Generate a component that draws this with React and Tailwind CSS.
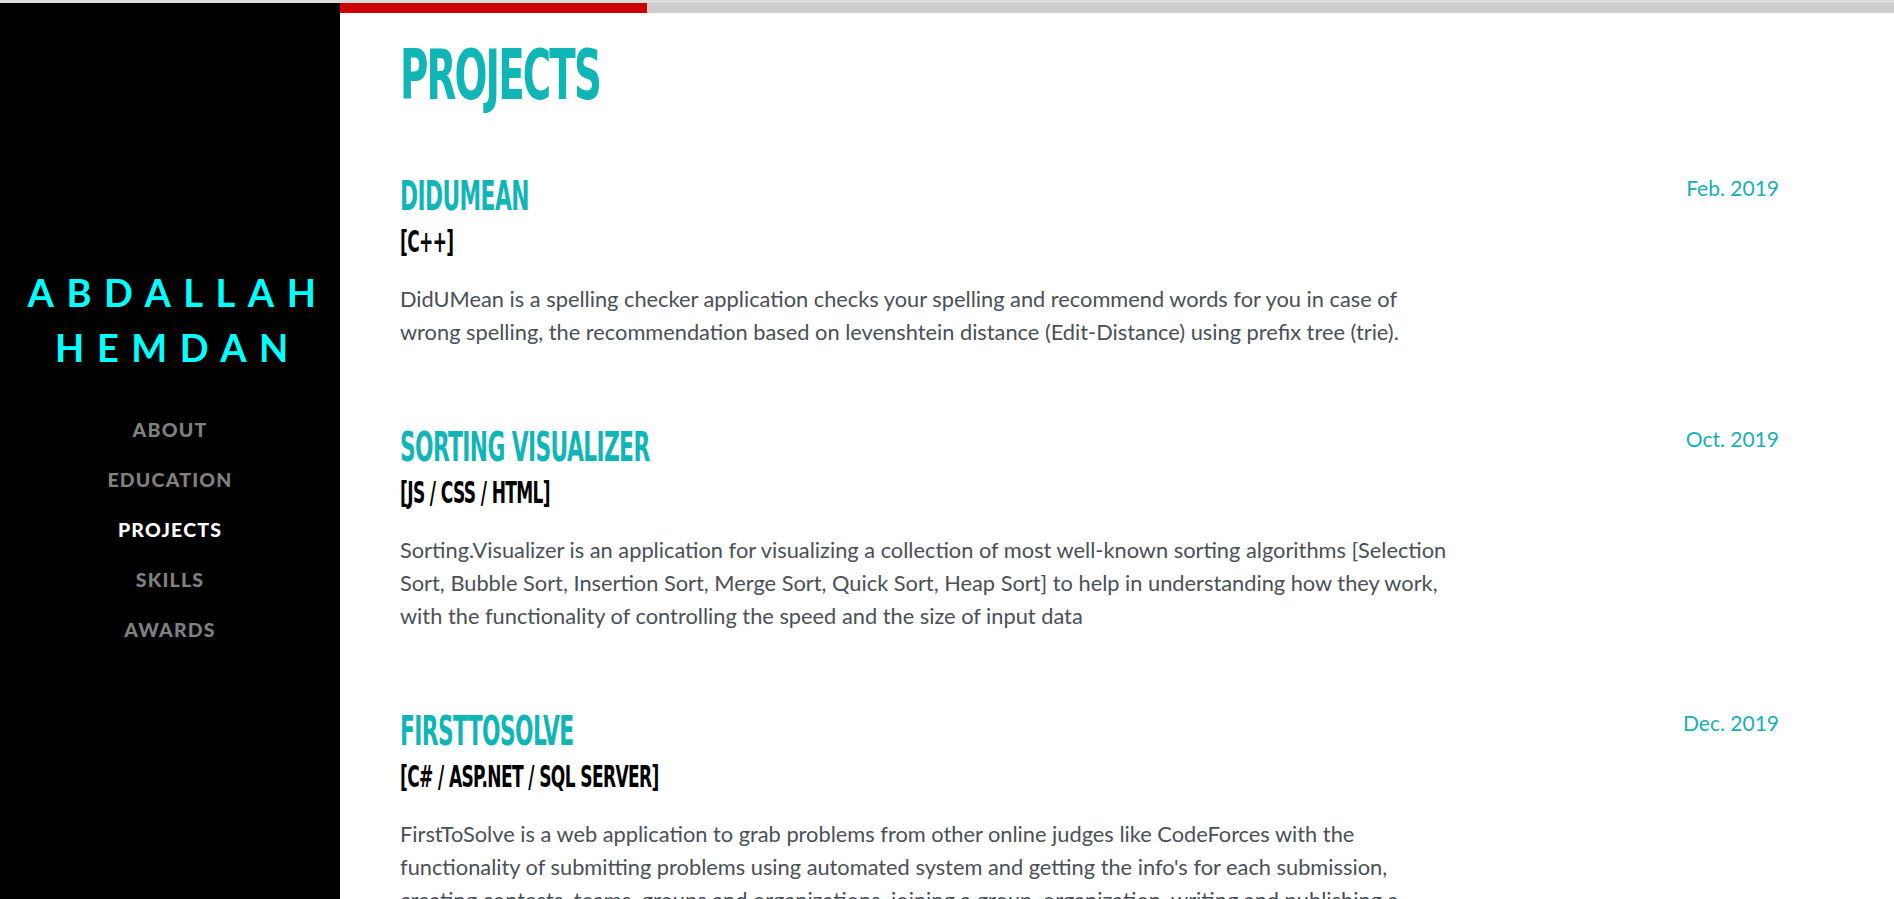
import React from 'react';

const NAV = ['About', 'Education', 'Projects', 'Skills', 'Awards'];

const PROJECTS = [
  {
    title: 'DidUMean',
    stack: '[C++]',
    date: 'Feb. 2019',
    width: 'max-w-[1050px]',
    desc: 'DidUMean is a spelling checker application checks your spelling and recommend words for you in case of wrong spelling, the recommendation based on levenshtein distance (Edit-Distance) using prefix tree (trie).',
  },
  {
    title: 'Sorting Visualizer',
    stack: '[JS / CSS / HTML]',
    date: 'Oct. 2019',
    width: 'max-w-[1050px]',
    desc: 'Sorting.Visualizer is an application for visualizing a collection of most well-known sorting algorithms [Selection Sort, Bubble Sort, Insertion Sort, Merge Sort, Quick Sort, Heap Sort] to help in understanding how they work, with the functionality of controlling the speed and the size of input data',
  },
  {
    title: 'FirstToSolve',
    stack: '[C# / ASP.NET / SQL Server]',
    date: 'Dec. 2019',
    width: 'max-w-[1020px]',
    desc: "FirstToSolve is a web application to grab problems from other online judges like CodeForces with the functionality of submitting problems using automated system and getting the info's for each submission, creating contests, teams, groups and organizations, joining a group, organization, writing and publishing a blog, commenting on blogs and problems.",
  },
];

// condensed display face (stand-in for Saira Extra Condensed)
const heading = "font-['DejaVu_Sans_Condensed','DejaVu_Sans',sans-serif] [font-stretch:condensed] font-bold uppercase whitespace-nowrap";

function Sidebar() {
  return (
    <aside className="w-[340px] shrink-0 bg-black flex flex-col items-center justify-center pt-[6px]">
      <h1 className="font-['Lato',sans-serif] font-bold text-[38px] leading-[55px] tracking-[12.5px] text-[#00ffff] text-center uppercase pl-[16px]">
        Abdallah
        <br />
        Hemdan
      </h1>
      <nav className="mt-[40px] flex flex-col items-center gap-[21px]">
        {NAV.map((item) => (
          <a
            key={item}
            href={`#${item.toLowerCase()}`}
            className={`font-['Lato',sans-serif] font-black text-[19.5px] leading-[29px] tracking-[1.2px] uppercase ${
              item === 'Projects' ? 'text-white' : 'text-[#808080]'
            }`}
          >
            {item}
          </a>
        ))}
      </nav>
    </aside>
  );
}

function ProjectItem({ project }) {
  return (
    <div className="flex justify-between mb-[75px]">
      <div className={`flex-1 ${project.width}`}>
        <h3 className={`${heading} text-[41px] leading-[48px] text-[#10b5b5] tracking-[-1px]`}>
          <span className="inline-block origin-left scale-x-[0.59]">{project.title}</span>
        </h3>
        <div className={`${heading} mt-[3px] text-[31px] leading-[36px] text-black tracking-[-1px]`}>
          <span className="inline-block origin-left scale-x-[0.61]">{project.stack}</span>
        </div>
        <p className="mt-[23px] font-['Lato',sans-serif] text-[21.8px] leading-[33px] text-[#495057]">
          {project.desc}
        </p>
      </div>
      <div className="font-['Lato',sans-serif] text-[21px] leading-[32px] text-[#17b0b8]">
        {project.date}
      </div>
    </div>
  );
}

export default function App() {
  return (
    <div className="h-screen overflow-hidden flex border-t-[3px] border-[#dcdcdc] bg-white">
      <Sidebar />
      <main className="flex-1 min-w-0">
        <div className="h-[10px] bg-[#cccccc]">
          <div className="h-full w-[307px] bg-[#cc0000]" />
        </div>
        <section className="pl-[60px] pr-[115px] pt-[22px]">
          <h2 className={`${heading} text-[70px] leading-[80px] text-[#10b5b5] tracking-[-3px]`}>
            <span className="inline-block origin-left scale-x-[0.615]">Projects</span>
          </h2>
          <div className="mt-[57px]">
            {PROJECTS.map((p) => (
              <ProjectItem key={p.title} project={p} />
            ))}
          </div>
        </section>
      </main>
    </div>
  );
}
